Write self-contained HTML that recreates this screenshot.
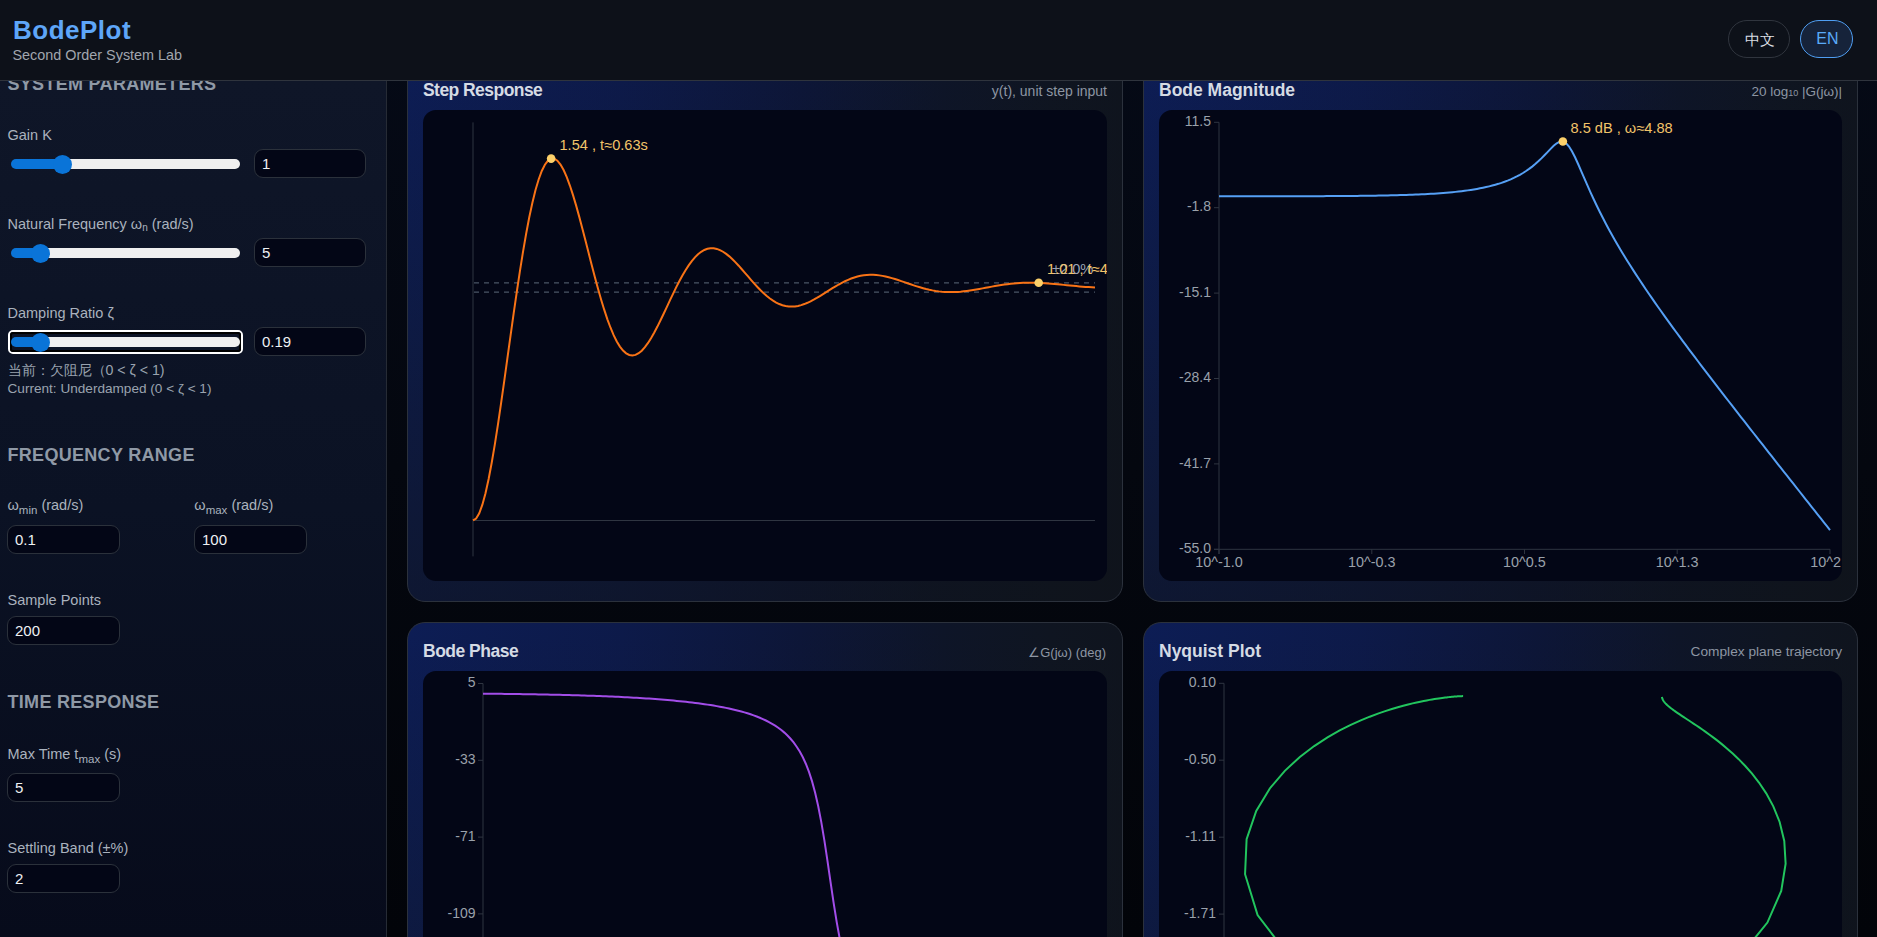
<!DOCTYPE html>
<html><head><meta charset="utf-8"><title>BodePlot</title>
<style>
html,body{margin:0;padding:0;}
body{width:1877px;height:937px;overflow:hidden;position:relative;background:linear-gradient(180deg,#050a17 0%,#04070f 50%,#020409 100%);font-family:"Liberation Sans", sans-serif;}
.t{position:absolute;line-height:1;white-space:nowrap;}
sub{font-size:11.5px;vertical-align:baseline;position:relative;top:4px;line-height:0}
</style></head><body>
<div style="position:absolute;left:0px;top:0px;width:1877px;height:81px;box-sizing:border-box;background:#0d1119;border-bottom:1px solid #2f343d;z-index:5"></div><div style="position:absolute;left:0px;top:81px;width:387px;height:856px;box-sizing:border-box;background:linear-gradient(180deg,#0f1628 0%,#0b1224 50%,#070b1b 100%);border-right:1px solid #262b35"></div><div style="position:absolute;left:407px;top:61px;width:716px;height:541px;box-sizing:border-box;background:linear-gradient(180deg,rgba(15,19,26,0) 0%,rgba(15,19,26,0.3) 50%,rgba(15,19,26,0.6) 100%),linear-gradient(90deg,#0d1d55 0%,#0d1a4a 30%,#0d1638 55%,#0e1528 75%,#0f1521 90%,#0f141e 100%);border:1px solid #2b313c;border-radius:18px"></div><div style="position:absolute;left:1143px;top:61px;width:715px;height:541px;box-sizing:border-box;background:linear-gradient(180deg,rgba(15,19,26,0) 0%,rgba(15,19,26,0.3) 50%,rgba(15,19,26,0.6) 100%),linear-gradient(90deg,#0d1d55 0%,#0d1a4a 30%,#0d1638 55%,#0e1528 75%,#0f1521 90%,#0f141e 100%);border:1px solid #2b313c;border-radius:18px"></div><div style="position:absolute;left:407px;top:622px;width:716px;height:541px;box-sizing:border-box;background:linear-gradient(180deg,rgba(15,19,26,0) 0%,rgba(15,19,26,0.3) 50%,rgba(15,19,26,0.6) 100%),linear-gradient(90deg,#0d1d55 0%,#0d1a4a 30%,#0d1638 55%,#0e1528 75%,#0f1521 90%,#0f141e 100%);border:1px solid #2b313c;border-radius:18px"></div><div style="position:absolute;left:1143px;top:622px;width:715px;height:541px;box-sizing:border-box;background:linear-gradient(180deg,rgba(15,19,26,0) 0%,rgba(15,19,26,0.3) 50%,rgba(15,19,26,0.6) 100%),linear-gradient(90deg,#0d1d55 0%,#0d1a4a 30%,#0d1638 55%,#0e1528 75%,#0f1521 90%,#0f141e 100%);border:1px solid #2b313c;border-radius:18px"></div><div style="position:absolute;left:423px;top:110px;width:684px;height:471px;box-sizing:border-box;background:#030616;border-radius:13px"></div><div style="position:absolute;left:1159px;top:110px;width:683px;height:471px;box-sizing:border-box;background:#030616;border-radius:13px"></div><div style="position:absolute;left:423px;top:671px;width:684px;height:471px;box-sizing:border-box;background:#030616;border-radius:13px"></div><div style="position:absolute;left:1159px;top:671px;width:683px;height:471px;box-sizing:border-box;background:#030616;border-radius:13px"></div><div class="t" style="left:423px;top:81.78px;font-size:17.5px;color:#d5dbe4;font-weight:700;letter-spacing:-0.55px;">Step Response</div><div class="t" style="left:1159px;top:81.78px;font-size:17.5px;color:#d5dbe4;font-weight:700;letter-spacing:0px;">Bode Magnitude</div><div class="t" style="left:423px;top:642.78px;font-size:17.5px;color:#d5dbe4;font-weight:700;letter-spacing:-0.5px;">Bode Phase</div><div class="t" style="left:1159px;top:642.78px;font-size:17.5px;color:#d5dbe4;font-weight:700;letter-spacing:0px;">Nyquist Plot</div><div class="t" style="right:770px;top:84.15px;font-size:14px;color:#8d96a3;font-weight:400;letter-spacing:0px;">y(t), unit step input</div><div class="t" style="right:35px;top:84.57px;font-size:13.5px;color:#8d96a3;font-weight:400;letter-spacing:0px;">20 log<span style='font-size:9px'>10</span> |G(jω)|</div><div class="t" style="right:771px;top:645.99px;font-size:13px;color:#8d96a3;font-weight:400;letter-spacing:0px;">∠G(jω) (deg)</div><div class="t" style="right:35px;top:645.40px;font-size:13.7px;color:#8d96a3;font-weight:400;letter-spacing:0px;">Complex plane trajectory</div><div style="position:absolute;left:423px;top:110px;width:684px;height:471px;overflow:hidden;border-radius:13px"><svg width="684" height="471" viewBox="423 110 684 471" style="display:block"><line x1="473" y1="122.4" x2="473" y2="556.4" stroke="#2f3541" stroke-width="1"/><line x1="473" y1="520.5" x2="1095" y2="520.5" stroke="#2f3541" stroke-width="1"/><line x1="474" y1="282.8" x2="1095" y2="282.8" stroke="#4b5566" stroke-width="1.2" stroke-dasharray="5 5"/><line x1="474" y1="292.1" x2="1095" y2="292.1" stroke="#4b5566" stroke-width="1.2" stroke-dasharray="5 5"/><path d="M473.00,520.40 L476.13,518.58 L479.25,513.27 L482.38,504.71 L485.50,493.17 L488.63,478.99 L491.75,462.50 L494.88,444.06 L498.01,424.05 L501.13,402.85 L504.26,380.83 L507.38,358.39 L510.51,335.87 L513.63,313.64 L516.76,292.02 L519.88,271.31 L523.01,251.79 L526.14,233.72 L529.26,217.28 L532.39,202.68 L535.51,190.03 L538.64,179.45 L541.76,171.01 L544.89,164.73 L548.02,160.61 L551.14,158.61 L554.27,158.66 L557.39,160.67 L560.52,164.52 L563.64,170.06 L566.77,177.12 L569.89,185.53 L573.02,195.09 L576.15,205.61 L579.27,216.88 L582.40,228.68 L585.52,240.82 L588.65,253.08 L591.77,265.28 L594.90,277.23 L598.03,288.76 L601.15,299.71 L604.28,309.94 L607.40,319.32 L610.53,327.75 L613.65,335.14 L616.78,341.44 L619.90,346.59 L623.03,350.56 L626.16,353.36 L629.28,354.99 L632.41,355.48 L635.53,354.88 L638.66,353.25 L641.78,350.66 L644.91,347.19 L648.04,342.94 L651.16,338.02 L654.29,332.52 L657.41,326.57 L660.54,320.26 L663.66,313.73 L666.79,307.07 L669.91,300.40 L673.04,293.82 L676.17,287.42 L679.29,281.30 L682.42,275.54 L685.54,270.21 L688.67,265.36 L691.79,261.07 L694.92,257.35 L698.05,254.25 L701.17,251.79 L704.30,249.96 L707.42,248.78 L710.55,248.22 L713.67,248.27 L716.80,248.90 L719.92,250.07 L723.05,251.74 L726.18,253.86 L729.30,256.37 L732.43,259.23 L735.55,262.36 L738.68,265.71 L741.80,269.22 L744.93,272.82 L748.06,276.45 L751.18,280.07 L754.31,283.60 L757.43,287.01 L760.56,290.25 L763.68,293.26 L766.81,296.03 L769.93,298.51 L773.06,300.68 L776.19,302.53 L779.31,304.04 L782.44,305.20 L785.56,306.00 L788.69,306.47 L791.81,306.59 L794.94,306.40 L798.07,305.90 L801.19,305.11 L804.32,304.07 L807.44,302.80 L810.57,301.33 L813.69,299.69 L816.82,297.92 L819.94,296.05 L823.07,294.11 L826.20,292.13 L829.32,290.15 L832.45,288.21 L835.57,286.31 L838.70,284.50 L841.82,282.80 L844.95,281.23 L848.08,279.80 L851.20,278.54 L854.33,277.45 L857.45,276.54 L860.58,275.82 L863.70,275.29 L866.83,274.95 L869.95,274.80 L873.08,274.82 L876.21,275.02 L879.33,275.37 L882.46,275.88 L885.58,276.51 L888.71,277.26 L891.83,278.12 L894.96,279.05 L898.09,280.04 L901.21,281.09 L904.34,282.15 L907.46,283.23 L910.59,284.30 L913.71,285.35 L916.84,286.36 L919.96,287.31 L923.09,288.20 L926.22,289.02 L929.34,289.75 L932.47,290.39 L935.59,290.93 L938.72,291.37 L941.84,291.71 L944.97,291.94 L948.10,292.07 L951.22,292.10 L954.35,292.04 L957.47,291.89 L960.60,291.65 L963.72,291.34 L966.85,290.96 L969.97,290.52 L973.10,290.03 L976.23,289.50 L979.35,288.95 L982.48,288.37 L985.60,287.78 L988.73,287.20 L991.85,286.62 L994.98,286.06 L998.11,285.53 L1001.23,285.02 L1004.36,284.56 L1007.48,284.14 L1010.61,283.77 L1013.73,283.45 L1016.86,283.18 L1019.98,282.97 L1023.11,282.82 L1026.24,282.72 L1029.36,282.68 L1032.49,282.69 L1035.61,282.75 L1038.74,282.86 L1041.86,283.01 L1044.99,283.20 L1048.12,283.42 L1051.24,283.68 L1054.37,283.96 L1057.49,284.25 L1060.62,284.56 L1063.74,284.88 L1066.87,285.20 L1069.99,285.52 L1073.12,285.82 L1076.25,286.12 L1079.37,286.40 L1082.50,286.67 L1085.62,286.91 L1088.75,287.12 L1091.87,287.31 L1095.00,287.47" fill="none" stroke="#f97316" stroke-width="2"/><circle cx="551.14" cy="158.61" r="4.3" fill="#fcd06a"/><circle cx="1038.7" cy="282.8" r="4.3" fill="#fcd06a"/><text x="559.5" y="149.8" font-size="14.6" fill="#f2c46a" font-family='"Liberation Sans", sans-serif'>1.54 , t≈0.63s</text><text x="1052" y="274.4" font-size="14.6" fill="#9aa3b5" font-family='"Liberation Sans", sans-serif'>±2.0%</text><text x="1047" y="274.4" font-size="14.6" fill="#f2c46a" font-family='"Liberation Sans", sans-serif'>1.01 , t≈4.56s</text></svg></div><div style="position:absolute;left:1159px;top:110px;width:683px;height:471px;overflow:hidden;border-radius:13px"><svg width="683" height="471" viewBox="1159 110 683 471" style="display:block"><line x1="1219" y1="122.3" x2="1219" y2="554" stroke="#2f3541"/><line x1="1214" y1="549.3" x2="1830" y2="549.3" stroke="#2f3541"/><line x1="1214" y1="122.3" x2="1219" y2="122.3" stroke="#2f3541"/><text x="1211" y="126.0" font-size="14" fill="#9aa1ab" text-anchor="end" font-family='"Liberation Sans", sans-serif'>11.5</text><line x1="1214" y1="207.7" x2="1219" y2="207.7" stroke="#2f3541"/><text x="1211" y="211.4" font-size="14" fill="#9aa1ab" text-anchor="end" font-family='"Liberation Sans", sans-serif'>-1.8</text><line x1="1214" y1="293.1" x2="1219" y2="293.1" stroke="#2f3541"/><text x="1211" y="296.8" font-size="14" fill="#9aa1ab" text-anchor="end" font-family='"Liberation Sans", sans-serif'>-15.1</text><line x1="1214" y1="378.5" x2="1219" y2="378.5" stroke="#2f3541"/><text x="1211" y="382.2" font-size="14" fill="#9aa1ab" text-anchor="end" font-family='"Liberation Sans", sans-serif'>-28.4</text><line x1="1214" y1="463.9" x2="1219" y2="463.9" stroke="#2f3541"/><text x="1211" y="467.6" font-size="14" fill="#9aa1ab" text-anchor="end" font-family='"Liberation Sans", sans-serif'>-41.7</text><line x1="1214" y1="549.3" x2="1219" y2="549.3" stroke="#2f3541"/><text x="1211" y="553.0" font-size="14" fill="#9aa1ab" text-anchor="end" font-family='"Liberation Sans", sans-serif'>-55.0</text><line x1="1219.0" y1="549.3" x2="1219.0" y2="554" stroke="#2f3541"/><text x="1219.0" y="567" font-size="14.4" fill="#9aa1ab" text-anchor="middle" font-family='"Liberation Sans", sans-serif'>10^-1.0</text><line x1="1371.8" y1="549.3" x2="1371.8" y2="554" stroke="#2f3541"/><text x="1371.8" y="567" font-size="14.4" fill="#9aa1ab" text-anchor="middle" font-family='"Liberation Sans", sans-serif'>10^-0.3</text><line x1="1524.5" y1="549.3" x2="1524.5" y2="554" stroke="#2f3541"/><text x="1524.5" y="567" font-size="14.4" fill="#9aa1ab" text-anchor="middle" font-family='"Liberation Sans", sans-serif'>10^0.5</text><line x1="1677.2" y1="549.3" x2="1677.2" y2="554" stroke="#2f3541"/><text x="1677.2" y="567" font-size="14.4" fill="#9aa1ab" text-anchor="middle" font-family='"Liberation Sans", sans-serif'>10^1.3</text><line x1="1830.0" y1="549.3" x2="1830.0" y2="554" stroke="#2f3541"/><text x="1841.0" y="567" font-size="14.4" fill="#9aa1ab" text-anchor="end" font-family='"Liberation Sans", sans-serif'>10^2</text><path d="M1219.00,196.34 L1222.07,196.34 L1225.14,196.33 L1228.21,196.33 L1231.28,196.33 L1234.35,196.33 L1237.42,196.33 L1240.49,196.33 L1243.56,196.32 L1246.63,196.32 L1249.70,196.32 L1252.77,196.31 L1255.84,196.31 L1258.91,196.31 L1261.98,196.30 L1265.06,196.30 L1268.13,196.30 L1271.20,196.29 L1274.27,196.29 L1277.34,196.28 L1280.41,196.28 L1283.48,196.27 L1286.55,196.26 L1289.62,196.26 L1292.69,196.25 L1295.76,196.24 L1298.83,196.23 L1301.90,196.22 L1304.97,196.21 L1308.04,196.20 L1311.11,196.19 L1314.18,196.18 L1317.25,196.17 L1320.32,196.15 L1323.39,196.14 L1326.46,196.12 L1329.53,196.11 L1332.60,196.09 L1335.67,196.07 L1338.74,196.05 L1341.81,196.03 L1344.88,196.00 L1347.95,195.98 L1351.03,195.95 L1354.10,195.92 L1357.17,195.89 L1360.24,195.85 L1363.31,195.82 L1366.38,195.78 L1369.45,195.74 L1372.52,195.69 L1375.59,195.64 L1378.66,195.59 L1381.73,195.53 L1384.80,195.47 L1387.87,195.41 L1390.94,195.34 L1394.01,195.27 L1397.08,195.19 L1400.15,195.10 L1403.22,195.01 L1406.29,194.92 L1409.36,194.81 L1412.43,194.70 L1415.50,194.58 L1418.57,194.45 L1421.64,194.31 L1424.71,194.16 L1427.78,194.00 L1430.85,193.82 L1433.92,193.64 L1436.99,193.44 L1440.07,193.22 L1443.14,192.99 L1446.21,192.74 L1449.28,192.47 L1452.35,192.19 L1455.42,191.88 L1458.49,191.54 L1461.56,191.18 L1464.63,190.80 L1467.70,190.38 L1470.77,189.93 L1473.84,189.44 L1476.91,188.92 L1479.98,188.35 L1483.05,187.74 L1486.12,187.07 L1489.19,186.36 L1492.26,185.58 L1495.33,184.74 L1498.40,183.83 L1501.47,182.84 L1504.54,181.76 L1507.61,180.60 L1510.68,179.32 L1513.75,177.94 L1516.82,176.43 L1519.89,174.79 L1522.96,173.00 L1526.04,171.04 L1529.11,168.91 L1532.18,166.59 L1535.25,164.06 L1538.32,161.33 L1541.39,158.40 L1544.46,155.29 L1547.53,152.07 L1550.60,148.84 L1553.67,145.82 L1556.74,143.30 L1559.81,141.73 L1562.88,141.55 L1565.95,143.11 L1569.02,146.50 L1572.09,151.44 L1575.16,157.51 L1578.23,164.24 L1581.30,171.29 L1584.37,178.40 L1587.44,185.43 L1590.51,192.31 L1593.58,198.99 L1596.65,205.46 L1599.72,211.73 L1602.79,217.80 L1605.86,223.70 L1608.93,229.42 L1612.01,234.99 L1615.08,240.42 L1618.15,245.72 L1621.22,250.90 L1624.29,255.97 L1627.36,260.95 L1630.43,265.84 L1633.50,270.65 L1636.57,275.39 L1639.64,280.06 L1642.71,284.67 L1645.78,289.22 L1648.85,293.72 L1651.92,298.17 L1654.99,302.58 L1658.06,306.95 L1661.13,311.28 L1664.20,315.58 L1667.27,319.85 L1670.34,324.09 L1673.41,328.30 L1676.48,332.49 L1679.55,336.65 L1682.62,340.80 L1685.69,344.92 L1688.76,349.03 L1691.83,353.12 L1694.90,357.19 L1697.97,361.25 L1701.05,365.30 L1704.12,369.33 L1707.19,373.35 L1710.26,377.37 L1713.33,381.37 L1716.40,385.36 L1719.47,389.34 L1722.54,393.32 L1725.61,397.29 L1728.68,401.25 L1731.75,405.21 L1734.82,409.16 L1737.89,413.10 L1740.96,417.04 L1744.03,420.97 L1747.10,424.90 L1750.17,428.83 L1753.24,432.75 L1756.31,436.67 L1759.38,440.58 L1762.45,444.49 L1765.52,448.40 L1768.59,452.31 L1771.66,456.21 L1774.73,460.11 L1777.80,464.01 L1780.87,467.91 L1783.94,471.80 L1787.02,475.69 L1790.09,479.59 L1793.16,483.48 L1796.23,487.36 L1799.30,491.25 L1802.37,495.14 L1805.44,499.02 L1808.51,502.90 L1811.58,506.79 L1814.65,510.67 L1817.72,514.55 L1820.79,518.43 L1823.86,522.31 L1826.93,526.18 L1830.00,530.06" fill="none" stroke="#56a0f5" stroke-width="2"/><circle cx="1562.88" cy="141.55" r="4.3" fill="#fcd06a"/><text x="1570.5" y="132.8" font-size="14.6" fill="#f2c46a" font-family='"Liberation Sans", sans-serif'>8.5 dB , ω≈4.88</text></svg></div><div style="position:absolute;left:423px;top:671px;width:684px;height:471px;overflow:hidden;border-radius:13px"><svg width="684" height="471" viewBox="423 671 684 471" style="display:block"><line x1="483" y1="683.5" x2="483" y2="1110" stroke="#2f3541"/><line x1="478" y1="683.5" x2="483" y2="683.5" stroke="#2f3541"/><text x="475.5" y="687.2" font-size="14" fill="#9aa1ab" text-anchor="end" font-family='"Liberation Sans", sans-serif'>5</text><line x1="478" y1="760.3" x2="483" y2="760.3" stroke="#2f3541"/><text x="475.5" y="764.0" font-size="14" fill="#9aa1ab" text-anchor="end" font-family='"Liberation Sans", sans-serif'>-33</text><line x1="478" y1="837.1" x2="483" y2="837.1" stroke="#2f3541"/><text x="475.5" y="840.8" font-size="14" fill="#9aa1ab" text-anchor="end" font-family='"Liberation Sans", sans-serif'>-71</text><line x1="478" y1="913.9" x2="483" y2="913.9" stroke="#2f3541"/><text x="475.5" y="917.6" font-size="14" fill="#9aa1ab" text-anchor="end" font-family='"Liberation Sans", sans-serif'>-109</text><line x1="478" y1="990.7" x2="483" y2="990.7" stroke="#2f3541"/><text x="475.5" y="994.4" font-size="14" fill="#9aa1ab" text-anchor="end" font-family='"Liberation Sans", sans-serif'>-147</text><path d="M483.00,693.65 L486.08,693.68 L489.15,693.71 L492.23,693.75 L495.30,693.78 L498.38,693.82 L501.45,693.85 L504.53,693.89 L507.60,693.93 L510.68,693.97 L513.75,694.02 L516.83,694.06 L519.90,694.11 L522.98,694.15 L526.06,694.20 L529.13,694.25 L532.21,694.31 L535.28,694.36 L538.36,694.42 L541.43,694.48 L544.51,694.54 L547.58,694.60 L550.66,694.67 L553.73,694.73 L556.81,694.80 L559.88,694.87 L562.96,694.95 L566.04,695.03 L569.11,695.11 L572.19,695.19 L575.26,695.28 L578.34,695.37 L581.41,695.46 L584.49,695.55 L587.56,695.65 L590.64,695.76 L593.71,695.86 L596.79,695.97 L599.86,696.09 L602.94,696.21 L606.02,696.33 L609.09,696.46 L612.17,696.59 L615.24,696.73 L618.32,696.87 L621.39,697.02 L624.47,697.17 L627.54,697.33 L630.62,697.49 L633.69,697.66 L636.77,697.84 L639.84,698.03 L642.92,698.22 L645.99,698.41 L649.07,698.62 L652.15,698.83 L655.22,699.06 L658.30,699.29 L661.37,699.53 L664.45,699.78 L667.52,700.04 L670.60,700.31 L673.67,700.59 L676.75,700.88 L679.82,701.19 L682.90,701.51 L685.97,701.84 L689.05,702.19 L692.13,702.55 L695.20,702.93 L698.28,703.32 L701.35,703.73 L704.43,704.17 L707.50,704.62 L710.58,705.10 L713.65,705.60 L716.73,706.12 L719.80,706.67 L722.88,707.25 L725.95,707.86 L729.03,708.51 L732.11,709.19 L735.18,709.92 L738.26,710.68 L741.33,711.50 L744.41,712.37 L747.48,713.29 L750.56,714.29 L753.63,715.35 L756.71,716.49 L759.78,717.72 L762.86,719.05 L765.93,720.49 L769.01,722.06 L772.09,723.78 L775.16,725.66 L778.24,727.74 L781.31,730.05 L784.39,732.62 L787.46,735.50 L790.54,738.76 L793.61,742.46 L796.69,746.70 L799.76,751.59 L802.84,757.30 L805.91,764.00 L808.99,771.94 L812.07,781.40 L815.14,792.71 L818.22,806.20 L821.29,822.13 L824.37,840.45 L827.44,860.70 L830.52,881.87 L833.59,902.63 L836.67,921.81 L839.74,938.71 L842.82,953.15 L845.89,965.29 L848.97,975.44 L852.05,983.94 L855.12,991.10 L858.20,997.18 L861.27,1002.38 L864.35,1006.86 L867.42,1010.76 L870.50,1014.19 L873.57,1017.21 L876.65,1019.90 L879.72,1022.30 L882.80,1024.47 L885.87,1026.43 L888.95,1028.21 L892.03,1029.83 L895.10,1031.32 L898.18,1032.70 L901.25,1033.97 L904.33,1035.14 L907.40,1036.23 L910.48,1037.25 L913.55,1038.20 L916.63,1039.09 L919.70,1039.93 L922.78,1040.71 L925.85,1041.45 L928.93,1042.15 L932.01,1042.81 L935.08,1043.44 L938.16,1044.03 L941.23,1044.59 L944.31,1045.13 L947.38,1045.64 L950.46,1046.12 L953.53,1046.58 L956.61,1047.03 L959.68,1047.45 L962.76,1047.85 L965.83,1048.23 L968.91,1048.60 L971.98,1048.95 L975.06,1049.29 L978.14,1049.62 L981.21,1049.93 L984.29,1050.22 L987.36,1050.51 L990.44,1050.79 L993.51,1051.05 L996.59,1051.30 L999.66,1051.55 L1002.74,1051.78 L1005.81,1052.01 L1008.89,1052.23 L1011.96,1052.43 L1015.04,1052.64 L1018.12,1052.83 L1021.19,1053.02 L1024.27,1053.20 L1027.34,1053.37 L1030.42,1053.54 L1033.49,1053.70 L1036.57,1053.85 L1039.64,1054.00 L1042.72,1054.15 L1045.79,1054.29 L1048.87,1054.42 L1051.94,1054.55 L1055.02,1054.67 L1058.10,1054.79 L1061.17,1054.91 L1064.25,1055.02 L1067.32,1055.13 L1070.40,1055.24 L1073.47,1055.34 L1076.55,1055.43 L1079.62,1055.53 L1082.70,1055.62 L1085.77,1055.71 L1088.85,1055.79 L1091.92,1055.87 L1095.00,1055.95" fill="none" stroke="#a24de8" stroke-width="2"/></svg></div><div style="position:absolute;left:1159px;top:671px;width:683px;height:471px;overflow:hidden;border-radius:13px"><svg width="683" height="471" viewBox="1159 671 683 471" style="display:block"><line x1="1224" y1="683.3" x2="1224" y2="1110" stroke="#2f3541"/><line x1="1219" y1="683.3" x2="1224" y2="683.3" stroke="#2f3541"/><text x="1216" y="687.0" font-size="14" fill="#9aa1ab" text-anchor="end" font-family='"Liberation Sans", sans-serif'>0.10</text><line x1="1219" y1="760.2" x2="1224" y2="760.2" stroke="#2f3541"/><text x="1216" y="764.0" font-size="14" fill="#9aa1ab" text-anchor="end" font-family='"Liberation Sans", sans-serif'>-0.50</text><line x1="1219" y1="837.2" x2="1224" y2="837.2" stroke="#2f3541"/><text x="1216" y="840.9" font-size="14" fill="#9aa1ab" text-anchor="end" font-family='"Liberation Sans", sans-serif'>-1.11</text><line x1="1219" y1="914.1" x2="1224" y2="914.1" stroke="#2f3541"/><text x="1216" y="917.9" font-size="14" fill="#9aa1ab" text-anchor="end" font-family='"Liberation Sans", sans-serif'>-1.71</text><line x1="1219" y1="991.1" x2="1224" y2="991.1" stroke="#2f3541"/><text x="1216" y="994.8" font-size="14" fill="#9aa1ab" text-anchor="end" font-family='"Liberation Sans", sans-serif'>-2.31</text><path d="M1661.97,697.07 L1661.97,697.10 L1661.98,697.14 L1661.98,697.18 L1661.99,697.21 L1662.00,697.25 L1662.00,697.29 L1662.01,697.34 L1662.02,697.38 L1662.03,697.43 L1662.04,697.47 L1662.05,697.52 L1662.06,697.57 L1662.07,697.62 L1662.08,697.68 L1662.09,697.73 L1662.11,697.79 L1662.12,697.85 L1662.14,697.91 L1662.15,697.98 L1662.17,698.05 L1662.19,698.11 L1662.21,698.19 L1662.24,698.26 L1662.26,698.34 L1662.29,698.42 L1662.31,698.50 L1662.34,698.58 L1662.38,698.67 L1662.41,698.77 L1662.45,698.86 L1662.49,698.96 L1662.53,699.06 L1662.57,699.17 L1662.62,699.28 L1662.67,699.39 L1662.73,699.51 L1662.79,699.63 L1662.85,699.76 L1662.92,699.89 L1663.00,700.03 L1663.07,700.17 L1663.16,700.32 L1663.25,700.47 L1663.35,700.63 L1663.45,700.80 L1663.57,700.97 L1663.69,701.15 L1663.82,701.33 L1663.95,701.53 L1664.10,701.73 L1664.26,701.94 L1664.43,702.15 L1664.62,702.38 L1664.82,702.62 L1665.03,702.86 L1665.26,703.12 L1665.50,703.39 L1665.76,703.66 L1666.05,703.96 L1666.35,704.26 L1666.68,704.58 L1667.03,704.91 L1667.40,705.26 L1667.81,705.62 L1668.24,706.01 L1668.71,706.41 L1669.22,706.83 L1669.76,707.27 L1670.34,707.74 L1670.97,708.23 L1671.65,708.75 L1672.38,709.30 L1673.16,709.88 L1674.01,710.49 L1674.92,711.14 L1675.91,711.84 L1676.98,712.58 L1678.13,713.36 L1679.37,714.20 L1680.72,715.11 L1682.17,716.08 L1683.75,717.12 L1685.46,718.24 L1687.31,719.46 L1689.31,720.78 L1691.49,722.22 L1693.86,723.80 L1696.43,725.52 L1699.23,727.42 L1702.28,729.52 L1705.60,731.86 L1709.21,734.46 L1713.15,737.38 L1717.44,740.66 L1722.11,744.39 L1727.19,748.64 L1732.70,753.52 L1738.66,759.16 L1745.05,765.73 L1751.85,773.43 L1758.97,782.53 L1766.23,793.36 L1773.31,806.35 L1779.64,822.00 L1784.27,840.91 L1785.63,863.71 L1781.24,890.93 L1767.40,922.56 L1739.12,957.46 L1691.08,992.25 L1620.34,1020.59 L1530.73,1034.22 L1435.23,1027.00 L1351.30,999.51 L1291.32,959.13 L1257.58,915.13 L1245.05,874.17 L1246.61,839.27 L1256.24,810.94 L1269.81,788.47 L1284.82,770.82 L1299.85,756.97 L1314.19,746.05 L1327.51,737.39 L1339.70,730.48 L1350.77,724.91 L1360.77,720.38 L1369.78,716.69 L1377.91,713.64 L1385.24,711.11 L1391.85,709.01 L1397.82,707.24 L1403.23,705.74 L1408.13,704.48 L1412.58,703.40 L1416.63,702.47 L1420.31,701.68 L1423.68,701.00 L1426.75,700.41 L1429.56,699.89 L1432.13,699.45 L1434.49,699.06 L1436.66,698.72 L1438.65,698.42 L1440.48,698.16 L1442.17,697.93 L1443.73,697.73 L1445.16,697.55 L1446.49,697.39 L1447.71,697.25 L1448.84,697.13 L1449.89,697.02 L1450.86,696.92 L1451.76,696.83 L1452.59,696.75 L1453.36,696.69 L1454.07,696.62 L1454.74,696.57 L1455.35,696.52 L1455.92,696.48 L1456.45,696.44 L1456.95,696.40 L1457.40,696.37 L1457.83,696.34 L1458.23,696.32 L1458.59,696.30 L1458.94,696.28 L1459.26,696.26 L1459.55,696.24 L1459.83,696.23 L1460.08,696.22 L1460.32,696.20 L1460.55,696.19 L1460.75,696.18 L1460.95,696.18 L1461.13,696.17 L1461.29,696.16 L1461.45,696.16 L1461.60,696.15 L1461.73,696.14 L1461.86,696.14 L1461.97,696.14 L1462.08,696.13 L1462.19,696.13 L1462.28,696.13 L1462.37,696.12 L1462.45,696.12 L1462.53,696.12 L1462.60,696.12 L1462.67,696.12 L1462.73,696.11 L1462.79,696.11 L1462.85,696.11 L1462.90,696.11 L1462.94,696.11 L1462.99,696.11 L1463.03,696.11 L1463.07,696.11 L1463.10,696.11" fill="none" stroke="#22c55e" stroke-width="2"/></svg></div><div class="t" style="left:7.5px;top:74.86px;font-size:18px;color:#8f99a6;font-weight:700;letter-spacing:0.3px;">SYSTEM PARAMETERS</div><div class="t" style="left:7.5px;top:445.76px;font-size:18px;color:#8f99a6;font-weight:700;letter-spacing:0.3px;">FREQUENCY RANGE</div><div class="t" style="left:7.5px;top:693.26px;font-size:18px;color:#8f99a6;font-weight:700;letter-spacing:0.3px;">TIME RESPONSE</div><div class="t" style="left:7.5px;top:127.52px;font-size:14.5px;color:#aab2be;font-weight:400;letter-spacing:0px;">Gain K</div><div class="t" style="left:7.5px;top:216.92px;font-size:14.5px;color:#aab2be;font-weight:400;letter-spacing:0px;">Natural Frequency ω<span style='font-size:10px;position:relative;top:2px'>n</span> (rad/s)</div><div class="t" style="left:7.5px;top:305.62px;font-size:14.5px;color:#aab2be;font-weight:400;letter-spacing:0px;">Damping Ratio ζ</div><div class="t" style="left:7.5px;top:498.42px;font-size:14.5px;color:#aab2be;font-weight:400;letter-spacing:0px;">ω<sub>min</sub> (rad/s)</div><div class="t" style="left:194.3px;top:498.42px;font-size:14.5px;color:#aab2be;font-weight:400;letter-spacing:0px;">ω<sub>max</sub> (rad/s)</div><div class="t" style="left:7.5px;top:592.82px;font-size:14.5px;color:#aab2be;font-weight:400;letter-spacing:0px;">Sample Points</div><div class="t" style="left:7.5px;top:746.82px;font-size:14.5px;color:#aab2be;font-weight:400;letter-spacing:0px;">Max Time t<sub>max</sub> (s)</div><div class="t" style="left:7.5px;top:841.02px;font-size:14.5px;color:#aab2be;font-weight:400;letter-spacing:0px;">Settling Band (±%)</div><div class="t" style="left:7.5px;top:363.48px;font-size:14.2px;color:#9aa3af;font-weight:400;letter-spacing:0px;">当前：欠阻尼（0 &lt; ζ &lt; 1)</div><div class="t" style="left:7.5px;top:382.08px;font-size:13.6px;color:#9aa3af;font-weight:400;letter-spacing:0px;">Current: Underdamped (0 &lt; ζ &lt; 1)</div><div style="position:absolute;left:8px;top:330px;width:235px;height:24px;box-sizing:border-box;border:2px solid #ffffff;border-radius:5px"></div><div style="position:absolute;left:10px;top:332px;width:231px;height:20px;box-sizing:border-box;border:2px solid #000000;border-radius:3px"></div><div style="position:absolute;left:11px;top:159px;width:229px;height:10px;box-sizing:border-box;background:linear-gradient(90deg,#0a74d8 0,#0a74d8 51px,#efefef 51px);border-radius:5px"></div><div style="position:absolute;left:52.5px;top:154.5px;width:19px;height:19px;box-sizing:border-box;background:#0a74d8;border-radius:50%"></div><div style="position:absolute;left:11px;top:248px;width:229px;height:10px;box-sizing:border-box;background:linear-gradient(90deg,#0a74d8 0,#0a74d8 29px,#efefef 29px);border-radius:5px"></div><div style="position:absolute;left:30.5px;top:243.5px;width:19px;height:19px;box-sizing:border-box;background:#0a74d8;border-radius:50%"></div><div style="position:absolute;left:11px;top:337px;width:229px;height:10px;box-sizing:border-box;background:linear-gradient(90deg,#0a74d8 0,#0a74d8 29.6px,#efefef 29.6px);border-radius:5px"></div><div style="position:absolute;left:31.1px;top:332.5px;width:19px;height:19px;box-sizing:border-box;background:#0a74d8;border-radius:50%"></div><div style="position:absolute;left:254px;top:149px;width:112px;height:29px;box-sizing:border-box;background:#030616;border:1px solid #2b313b;border-radius:9px"></div><div class="t" style="left:262px;top:156.30px;font-size:15px;color:#eef0f3;font-weight:400;letter-spacing:0px;">1</div><div style="position:absolute;left:254px;top:238px;width:112px;height:29px;box-sizing:border-box;background:#030616;border:1px solid #2b313b;border-radius:9px"></div><div class="t" style="left:262px;top:245.30px;font-size:15px;color:#eef0f3;font-weight:400;letter-spacing:0px;">5</div><div style="position:absolute;left:254px;top:327px;width:112px;height:29px;box-sizing:border-box;background:#030616;border:1px solid #2b313b;border-radius:9px"></div><div class="t" style="left:262px;top:334.30px;font-size:15px;color:#eef0f3;font-weight:400;letter-spacing:0px;">0.19</div><div style="position:absolute;left:7px;top:525px;width:113px;height:29px;box-sizing:border-box;background:#030616;border:1px solid #2b313b;border-radius:9px"></div><div class="t" style="left:15px;top:532.10px;font-size:15px;color:#eef0f3;font-weight:400;letter-spacing:0px;">0.1</div><div style="position:absolute;left:194px;top:525px;width:113px;height:29px;box-sizing:border-box;background:#030616;border:1px solid #2b313b;border-radius:9px"></div><div class="t" style="left:202px;top:532.10px;font-size:15px;color:#eef0f3;font-weight:400;letter-spacing:0px;">100</div><div style="position:absolute;left:7px;top:616px;width:113px;height:29px;box-sizing:border-box;background:#030616;border:1px solid #2b313b;border-radius:9px"></div><div class="t" style="left:15px;top:622.90px;font-size:15px;color:#eef0f3;font-weight:400;letter-spacing:0px;">200</div><div style="position:absolute;left:7px;top:773px;width:113px;height:29px;box-sizing:border-box;background:#030616;border:1px solid #2b313b;border-radius:9px"></div><div class="t" style="left:15px;top:780.00px;font-size:15px;color:#eef0f3;font-weight:400;letter-spacing:0px;">5</div><div style="position:absolute;left:7px;top:864px;width:113px;height:29px;box-sizing:border-box;background:#030616;border:1px solid #2b313b;border-radius:9px"></div><div class="t" style="left:15px;top:871.10px;font-size:15px;color:#eef0f3;font-weight:400;letter-spacing:0px;">2</div><div class="t" style="left:13px;top:17.19px;font-size:26px;color:#5ea6f8;font-weight:700;letter-spacing:0.5px;z-index:7">BodePlot</div><div class="t" style="left:12.5px;top:47.81px;font-size:14.4px;color:#a1a6ae;font-weight:400;letter-spacing:0px;z-index:7">Second Order System Lab</div><div style="position:absolute;left:1728px;top:20px;width:62px;height:38px;box-sizing:border-box;border:1px solid #30353e;border-radius:19px;z-index:6"></div><div class="t" style="left:1744.5px;top:31.60px;font-size:15px;color:#d9dde3;font-weight:400;letter-spacing:0px;z-index:7">中文</div><div style="position:absolute;left:1800px;top:20px;width:53px;height:38px;box-sizing:border-box;border:1.5px solid #4f9ef2;background:#16233a;border-radius:19px;z-index:6"></div><div class="t" style="left:1816.3px;top:31.25px;font-size:16px;color:#5aaaf8;font-weight:400;letter-spacing:0px;z-index:7">EN</div>
</body></html>
